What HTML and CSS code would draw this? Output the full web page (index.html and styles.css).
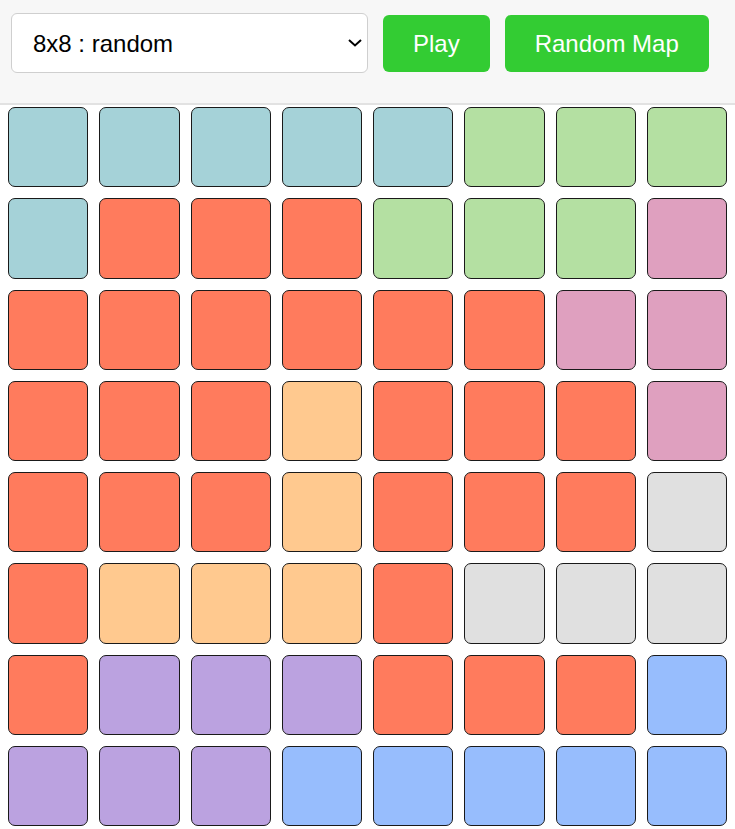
FILE: index.html
```html
<!DOCTYPE html>
<html>
<head>
<meta charset="utf-8">
<link rel="stylesheet" href="styles.css">
</head>
<body>
<div class="toolbar">
  <span class="select-wrap">
    <select class="map-select">
      <option>8x8 : random</option>
    </select>
    <svg class="chevron" width="14" height="8" viewBox="0 0 14 8"><path d="M1 1 L7 6.5 L13 1" fill="none" stroke="#000" stroke-width="2"/></svg>
  </span>
  <button class="btn">Play</button>
  <button class="btn">Random Map</button>
</div>
<div class="board">
  <div class="cell c-teal"></div><div class="cell c-teal"></div><div class="cell c-teal"></div><div class="cell c-teal"></div><div class="cell c-teal"></div><div class="cell c-green"></div><div class="cell c-green"></div><div class="cell c-green"></div>
  <div class="cell c-teal"></div><div class="cell c-red"></div><div class="cell c-red"></div><div class="cell c-red"></div><div class="cell c-green"></div><div class="cell c-green"></div><div class="cell c-green"></div><div class="cell c-pink"></div>
  <div class="cell c-red"></div><div class="cell c-red"></div><div class="cell c-red"></div><div class="cell c-red"></div><div class="cell c-red"></div><div class="cell c-red"></div><div class="cell c-pink"></div><div class="cell c-pink"></div>
  <div class="cell c-red"></div><div class="cell c-red"></div><div class="cell c-red"></div><div class="cell c-peach"></div><div class="cell c-red"></div><div class="cell c-red"></div><div class="cell c-red"></div><div class="cell c-pink"></div>
  <div class="cell c-red"></div><div class="cell c-red"></div><div class="cell c-red"></div><div class="cell c-peach"></div><div class="cell c-red"></div><div class="cell c-red"></div><div class="cell c-red"></div><div class="cell c-gray"></div>
  <div class="cell c-red"></div><div class="cell c-peach"></div><div class="cell c-peach"></div><div class="cell c-peach"></div><div class="cell c-red"></div><div class="cell c-gray"></div><div class="cell c-gray"></div><div class="cell c-gray"></div>
  <div class="cell c-red"></div><div class="cell c-purple"></div><div class="cell c-purple"></div><div class="cell c-purple"></div><div class="cell c-red"></div><div class="cell c-red"></div><div class="cell c-red"></div><div class="cell c-blue"></div>
  <div class="cell c-purple"></div><div class="cell c-purple"></div><div class="cell c-purple"></div><div class="cell c-blue"></div><div class="cell c-blue"></div><div class="cell c-blue"></div><div class="cell c-blue"></div><div class="cell c-blue"></div>
</div>
</body>
</html>
```

FILE: styles.css
```css
html, body {
  margin: 0;
  padding: 0;
  background: #ffffff;
  font-family: "Liberation Sans", Arial, sans-serif;
}

.toolbar {
  display: flex;
  align-items: flex-start;
  height: 105px;
  box-sizing: border-box;
  padding: 13px 11px 0 11px;
  gap: 15px;
  background: #f7f7f7;
  border-bottom: 2px solid #e2e2e2;
}

.select-wrap {
  position: relative;
  display: block;
}

.map-select {
  display: block;
  appearance: none;
  -webkit-appearance: none;
  width: 357px;
  height: 60px;
  margin: 0;
  padding: 0 40px 0 21px;
  font-family: "Liberation Sans", Arial, sans-serif;
  font-size: 24px;
  color: #000;
  background: #ffffff;
  border: 1px solid #cfcfcf;
  border-radius: 6px;
}

.chevron {
  position: absolute;
  left: 337px;
  top: 26px;
  pointer-events: none;
}

.btn {
  height: 57px;
  margin-top: 2px;
  padding: 0 30px;
  font-family: "Liberation Sans", Arial, sans-serif;
  font-size: 24px;
  color: #ffffff;
  background: #33cc33;
  border: none;
  border-radius: 6px;
}

.board {
  display: grid;
  grid-template-columns: repeat(8, 1fr);
  gap: 11px;
  padding: 2px 8px 8px 8px;
}

.cell {
  aspect-ratio: 1 / 1;
  box-sizing: border-box;
  border: 1px solid #1a1a1a;
  border-radius: 7px;
}

.c-teal { background: #a5d2d8; }
.c-green { background: #b4e0a2; }
.c-red { background: #ff7b5d; }
.c-pink { background: #dfa0bf; }
.c-peach { background: #ffc98f; }
.c-gray { background: #e0e0e0; }
.c-purple { background: #bba2e0; }
.c-blue { background: #97bdfd; }
```
